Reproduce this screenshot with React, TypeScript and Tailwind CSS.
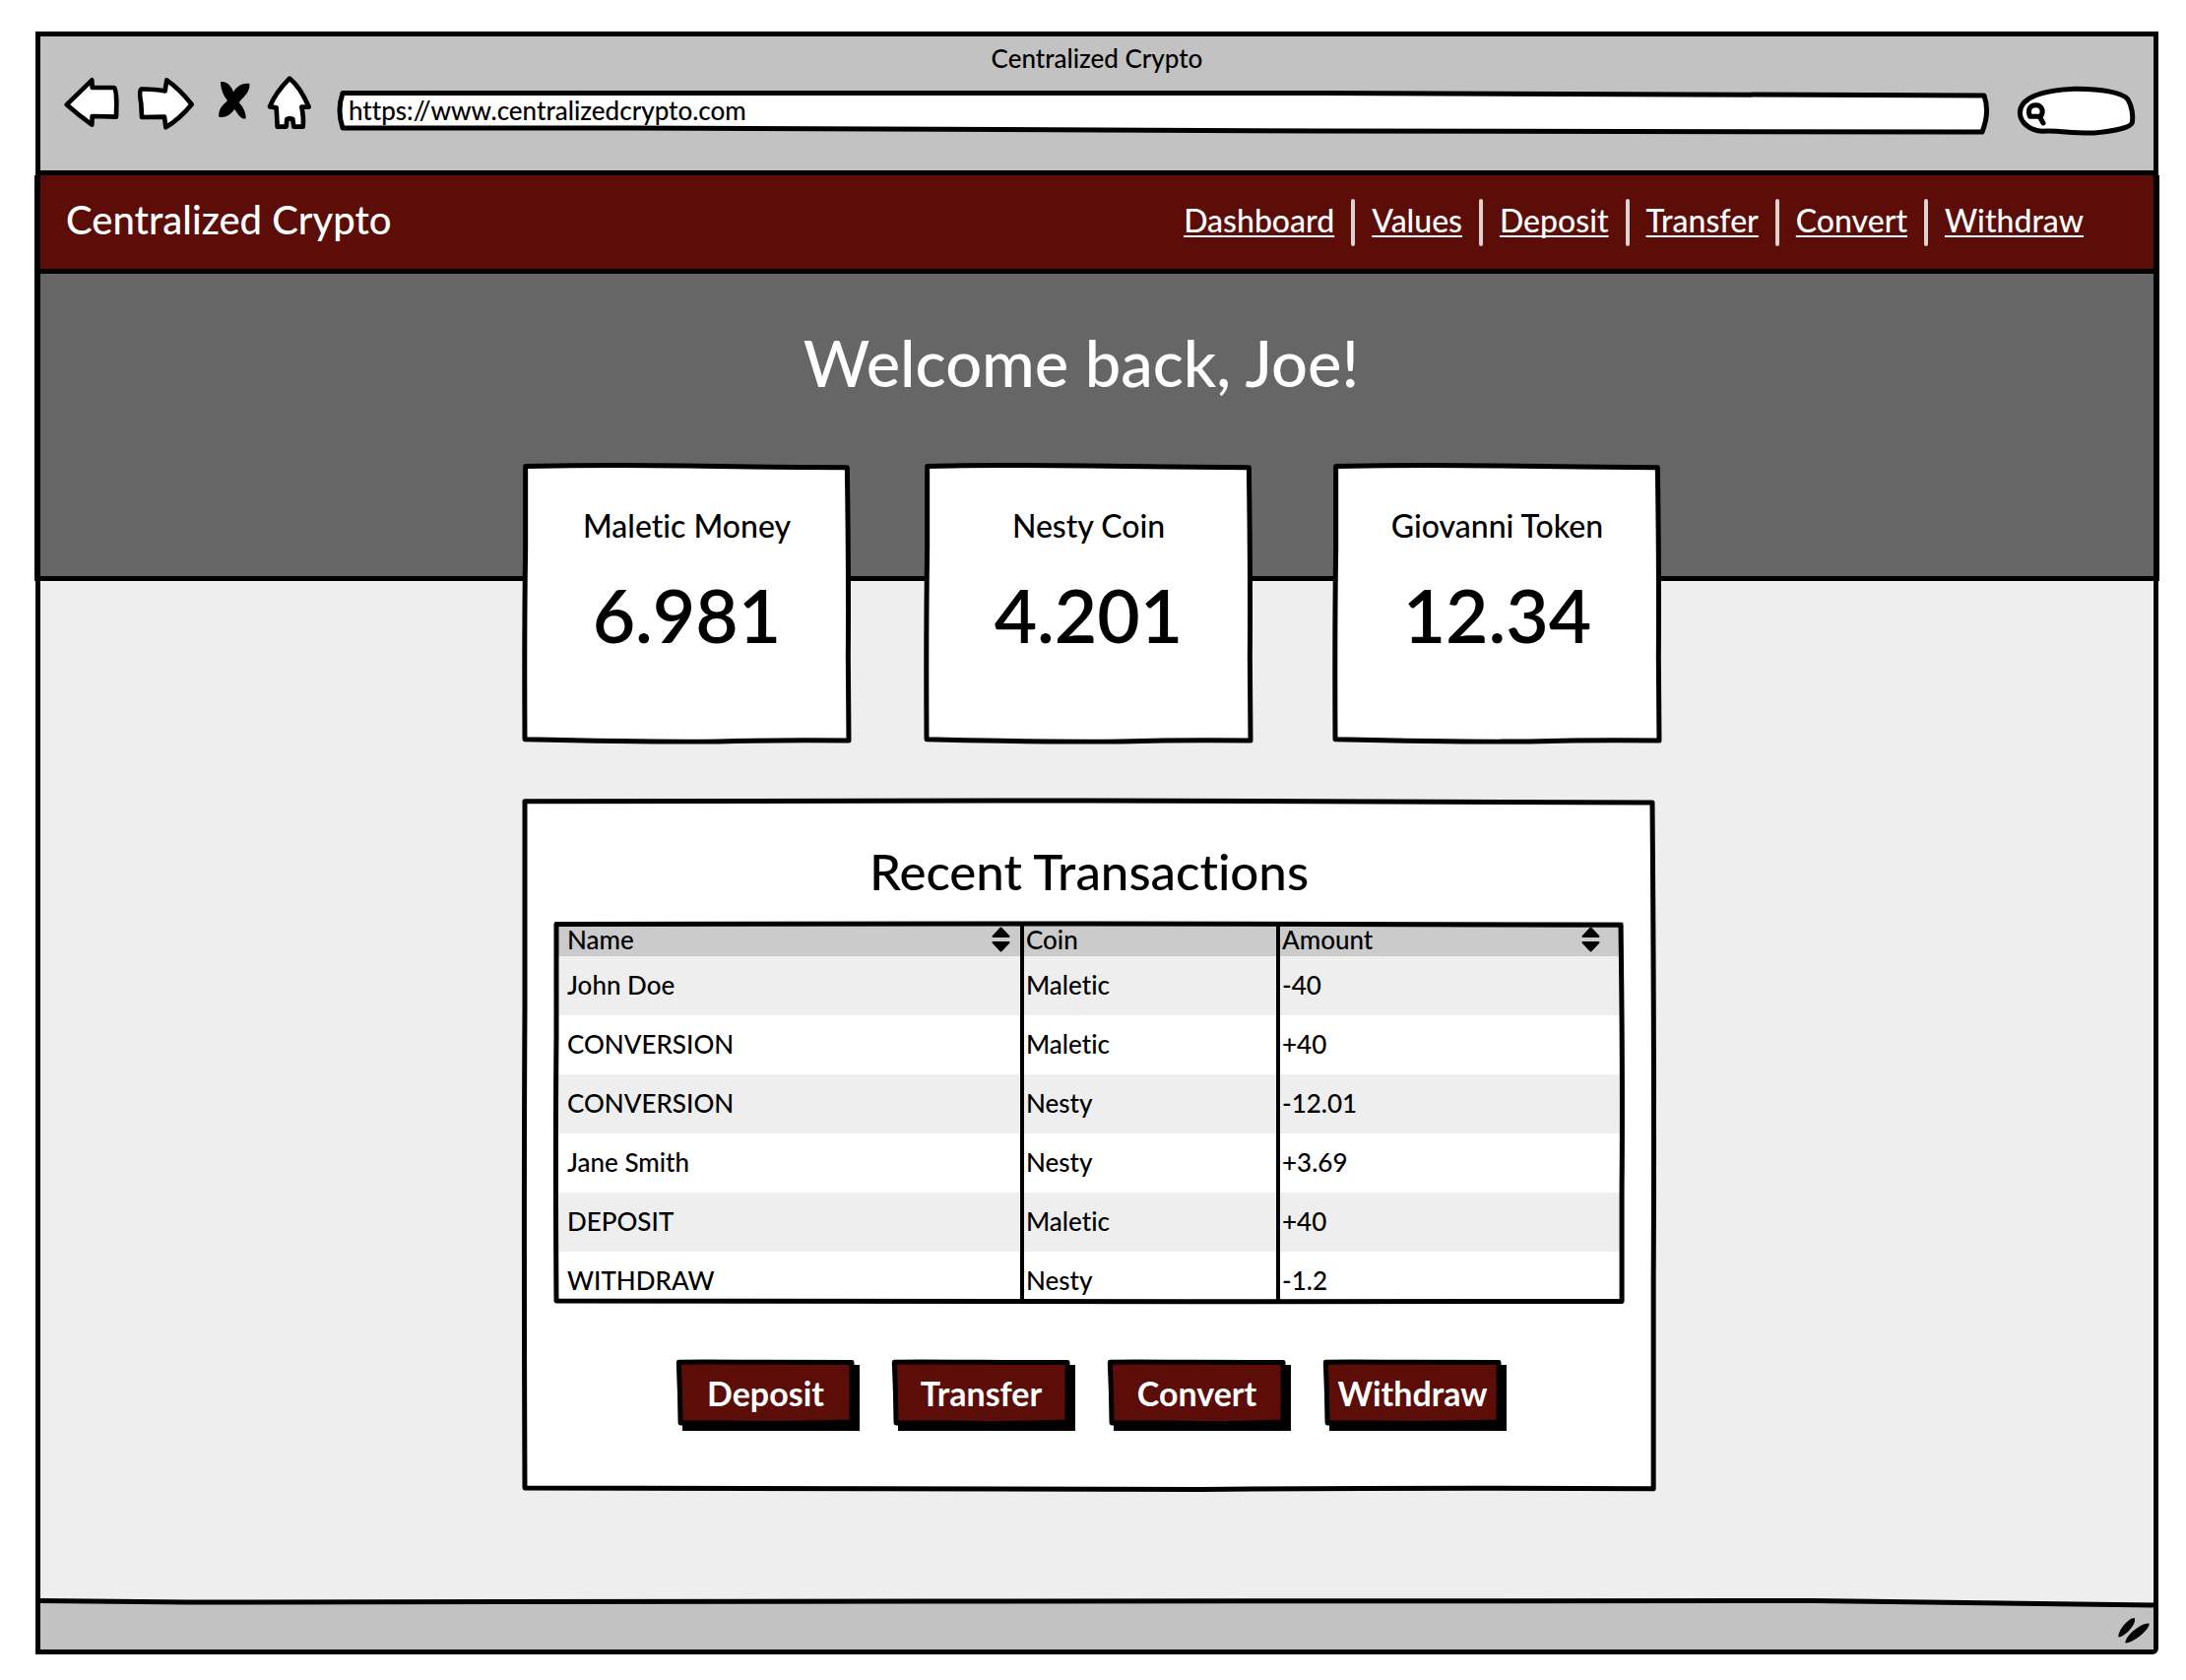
import type { ReactNode } from "react";

const NAV_LINKS = ["Dashboard", "Values", "Deposit", "Transfer", "Convert", "Withdraw"];

const BALANCES = [
  { name: "Maletic Money", amount: "6.981" },
  { name: "Nesty Coin", amount: "4.201" },
  { name: "Giovanni Token", amount: "12.34" },
];

const TRANSACTIONS = [
  { name: "John Doe", coin: "Maletic", amount: "-40" },
  { name: "CONVERSION", coin: "Maletic", amount: "+40" },
  { name: "CONVERSION", coin: "Nesty", amount: "-12.01" },
  { name: "Jane Smith", coin: "Nesty", amount: "+3.69" },
  { name: "DEPOSIT", coin: "Maletic", amount: "+40" },
  { name: "WITHDRAW", coin: "Nesty", amount: "-1.2" },
];

const ACTIONS = ["Deposit", "Transfer", "Convert", "Withdraw"];

/* Outlines on a 1000x1000 grid; a larger box needs a smaller wobble. */
const OUTLINES = {
  card: "M2 2 Q250 -5 500 0 Q750 5 998 6 Q1003 400 1001 700 L1003 1004 Q800 1001 600 1007 Q400 1010 0 999 Q-2 600 2 300 Z",
  panel: "M0 1 L500 0 Q750 2 1000 3 Q1002 400 1001 700 L1001 1001 Q800 999 600 1002 Q400 1003 0 1000 Q-1 600 0 300 Z",
  button: "M-4 5 Q60 -8 500 6 L1000 8 L1001 500 L1000 985 Q600 1020 300 1000 L6 998 Q4 500 -4 5 Z",
};

/* Slightly uneven hand-drawn outline that stretches with its parent box. */
function SketchBorder({ shape, fill = "none" }: { shape: keyof typeof OUTLINES; fill?: string }) {
  return (
    <svg
      aria-hidden="true"
      viewBox="0 0 1000 1000"
      preserveAspectRatio="none"
      className="pointer-events-none absolute top-[2px] left-[2px] h-[calc(100%-5px)] w-[calc(100%-5px)] overflow-visible"
    >
      <path
        d={OUTLINES[shape]}
        fill={fill}
        stroke="#000"
        strokeWidth="5"
        strokeLinejoin="round"
        vectorEffect="non-scaling-stroke"
      />
    </svg>
  );
}

function ToolButton({ label, children }: { label: string; children: ReactNode }) {
  return (
    <button type="button" aria-label={label} className="block shrink-0">
      {children}
    </button>
  );
}

function BrowserBar() {
  return (
    <header className="border-b-5 border-black bg-[#c2c2c2] pt-[6px] pb-[34px]">
      <p className="text-center text-[26px] leading-8 font-medium">Centralized Crypto</p>
      <div className="mt-px flex items-start pr-[18px] pl-[23px]">
        <div className="flex">
          <ToolButton label="Back">
            <svg width="58" height="56" viewBox="24 24 174 168" fill="#fff" stroke="#000" strokeWidth="14" strokeLinejoin="round">
              <path d="M35 115 L112 40 L113 63 L180 63 Q186 64 187 110 L186 152 L113 150 L112 176 Q75 150 35 115 Z" />
            </svg>
          </ToolButton>
          <div className="ml-4">
            <ToolButton label="Forward">
              <svg width="60" height="56" viewBox="246 24 180 168" fill="#fff" stroke="#000" strokeWidth="14" strokeLinejoin="round">
                <path d="M262 68 Q290 66 335 73 L340 40 Q380 68 416 114 Q380 158 337 184 L333 152 L264 153 L262 112 Q255 75 262 68 Z" />
              </svg>
            </ToolButton>
          </div>
          <div className="ml-[23px]">
            <ToolButton label="Stop">
              <svg width="34" height="56" viewBox="495 24 102 168" fill="#000">
                <path d="M504 46 C518 42 534 52 543 76 L556 104 C568 116 582 134 581 157 C570 161 560 150 549 132 L532 110 C516 94 505 74 504 46 Z" />
                <path d="M592 51 C594 68 584 84 568 98 L550 122 C540 142 522 156 499 152 C497 136 504 120 520 108 L541 80 C550 62 568 47 592 51 Z" />
              </svg>
            </ToolButton>
          </div>
          <div className="ml-[15px]">
            <ToolButton label="Home">
              <svg width="48" height="56" viewBox="642 24 144 168" fill="#fff" stroke="#000" strokeWidth="14" strokeLinejoin="round">
                <path d="M714 35 Q746 60 773 122 L751 122 Q758 155 755 182 L727 182 L724 159 Q714 155 706 159 L704 182 L677 182 L674 124 L654 121 Q670 80 714 35 Z" />
              </svg>
            </ToolButton>
          </div>
        </div>
        <div className="relative mt-4 ml-6 h-11 flex-1">
          <svg
            aria-hidden="true"
            viewBox="0 0 1678 44"
            preserveAspectRatio="none"
            className="pointer-events-none absolute inset-0 size-full overflow-visible"
          >
            <path
              d="M6 2.5 L1000 2.5 L1673 5 Q1679 22 1671 42 L1000 41 L300 38 L6 38 Q0 20 6 2.5 Z"
              fill="#fff"
              stroke="#000"
              strokeWidth="5"
              strokeLinejoin="round"
              vectorEffect="non-scaling-stroke"
            />
          </svg>
          <input
            type="text"
            aria-label="Address"
            defaultValue="https://www.centralizedcrypto.com"
            className="relative mt-1 block h-8 w-full bg-transparent px-3 text-[26px] leading-8 font-medium outline-none"
          />
        </div>
        <div className="relative mt-[11px] ml-7 h-[52px] w-[121px] shrink-0">
          <svg
            aria-hidden="true"
            viewBox="144 33 363 156"
            fill="none"
            stroke="#000"
            strokeWidth="15"
            strokeLinecap="round"
            strokeLinejoin="round"
            className="pointer-events-none absolute inset-0 size-full"
          >
            <path
              d="M222 172 C188 170 155 148 154 116 C155 72 210 48 320 43 C400 42 468 54 483 75 C495 95 500 125 496 146 C492 160 440 172 380 177 C310 179 270 168 222 172 Z"
              fill="#fff"
            />
            <path d="M185 127 C176 108 184 92 202 92 C222 92 228 112 217 127 Z" />
            <path d="M215 130 L225 147" />
          </svg>
          <input
            type="search"
            aria-label="Search"
            className="relative mt-2.5 ml-8 block h-8 w-20 bg-transparent text-[26px] outline-none"
          />
        </div>
      </div>
    </header>
  );
}

function SiteNav() {
  return (
    <nav className="-mx-[6px] flex h-[100px] items-center justify-between border-x-[6px] border-b-5 border-black bg-[#5c0d08] pr-[71px] pl-[26px] text-white">
      <p className="pb-[6px] text-[40px] leading-[48px] font-medium">Centralized Crypto</p>
      <ul className="flex items-center">
        {NAV_LINKS.map((link, i) => (
          <li key={link} className="flex items-center">
            {i > 0 && <span className="mx-[17px] h-12 w-1 rounded-full bg-[#dcd2d1]" />}
            <a
              href={`#${link.toLowerCase()}`}
              className="pb-1 text-[32px] leading-10 font-medium underline decoration-2 underline-offset-3 [text-decoration-skip-ink:none]"
            >
              {link}
            </a>
          </li>
        ))}
      </ul>
    </nav>
  );
}

function SortIcon() {
  return (
    <svg width="19" height="26" viewBox="0 0 19 26" fill="#000" stroke="#000" strokeWidth="2" strokeLinejoin="round">
      <path d="M9.5 1.5 L17.5 10 L1.5 10 Z" />
      <path d="M1.5 16 L17.5 16 L9.5 24.5 Z" />
    </svg>
  );
}

function HeaderCell({ label, sortable, className }: { label: string; sortable?: boolean; className: string }) {
  return (
    <th scope="col" className={`bg-[#cbcbcb] pt-0.5 pb-px text-left font-medium ${className}`}>
      <div className="flex items-center justify-between">
        {label}
        {sortable && (
          <button type="button" aria-label={`Sort by ${label}`}>
            <SortIcon />
          </button>
        )}
      </div>
    </th>
  );
}

function TransactionTable() {
  return (
    <div className="relative mt-[21px]">
      <table className="w-full table-fixed border-separate border-spacing-0 text-[26px] leading-8 font-medium">
        <colgroup>
          <col />
          <col className="w-[260px]" />
          <col className="w-[353px]" />
        </colgroup>
        <thead>
          <tr>
            <HeaderCell label="Name" sortable className="pr-[10px] pl-[13px]" />
            <HeaderCell label="Coin" className="border-l-4 border-black pl-0.5" />
            <HeaderCell label="Amount" sortable className="border-l-4 border-black pr-6 pl-0.5" />
          </tr>
        </thead>
        <tbody>
          {TRANSACTIONS.map((row, i) => (
            <tr
              key={i}
              className="bg-white odd:bg-[#eee] [&>td]:pt-[13px] [&>td]:pb-[15px] last:[&>td]:pb-2"
            >
              <td className="pl-[13px]">{row.name}</td>
              <td className="border-l-4 border-black pl-0.5">{row.coin}</td>
              <td className="border-l-4 border-black pl-0.5">{row.amount}</td>
            </tr>
          ))}
        </tbody>
      </table>
      <SketchBorder shape="panel" />
    </div>
  );
}

function ActionButton({ label }: { label: string }) {
  return (
    <button type="button" className="relative h-[67px] w-[180px] text-[34px] leading-10 font-bold text-white">
      <span className="absolute top-[5px] left-[5px] size-full bg-black" />
      <SketchBorder shape="button" fill="#5c0d08" />
      <span className="relative">{label}</span>
    </button>
  );
}

export default function App() {
  return (
    <div className="flex min-h-screen flex-col bg-white pt-8 pr-7 pb-[26px] pl-9 font-['Lato',sans-serif] text-black [font-variant-ligatures:none]">
      <div className="flex flex-1 flex-col rounded-br-md border-5 border-black bg-[#eee]">
        <BrowserBar />
        <SiteNav />
        <section className="-mx-[6px] h-[312px] border-x-[6px] border-b-5 border-black bg-[#666] pt-[50px] pr-8">
          <h1 className="text-center text-[65px] leading-[80px] font-medium text-white">Welcome back, Joe!</h1>
        </section>
        <main className="flex flex-1 justify-center pr-[10px] pb-[107px]">
          <div className="-mt-[119px] w-[1156px]">
            <section aria-label="Balances" className="grid grid-cols-[408px_415px_333px]">
              {BALANCES.map(({ name, amount }) => (
                <article key={name} className="relative h-[283px] w-[333px] pt-[43px] text-center">
                  <SketchBorder shape="card" fill="#fff" />
                  <h2 className="relative text-[32px] leading-10 font-medium">{name}</h2>
                  <p className="relative mt-6 text-[75px] leading-[92px] font-semibold">{amount}</p>
                </article>
              ))}
            </section>
            <section className="relative mt-[57px] mr-[6px] px-8 pt-[44px] pb-[66px]">
              <SketchBorder shape="panel" fill="#fff" />
              <h2 className="relative text-center text-[51px] leading-[60px] font-medium">Recent Transactions</h2>
              <TransactionTable />
              <div className="mt-[57px] flex justify-center gap-[39px]">
                {ACTIONS.map((label) => (
                  <ActionButton key={label} label={label} />
                ))}
              </div>
            </section>
          </div>
        </main>
        <footer className="relative h-[52px] bg-[#c2c2c2]">
          <svg
            aria-hidden="true"
            viewBox="0 0 2146 10"
            preserveAspectRatio="none"
            className="absolute inset-x-0 top-0 h-[10px] w-full overflow-visible"
          >
            <path d="M0 0 L2146 0 L2146 7 L1800 2 L0 2 Z" fill="#eee" />
            <path
              d="M0 2.5 L150 4 L900 3 L1800 2.5 L2146 7"
              fill="none"
              stroke="#000"
              strokeWidth="5"
              vectorEffect="non-scaling-stroke"
            />
          </svg>
          <svg aria-hidden="true" width="34" height="28" viewBox="0 0 34 28" className="absolute right-[3px] bottom-[5px]">
            <path d="M1.5 20.5 C0 15 11 1 17.5 1 C21 5 9 20 1.5 20.5 Z" />
            <path d="M8.5 26.5 C7 20 25 5 32.5 6.5 C34 12 17 26 8.5 26.5 Z" />
          </svg>
        </footer>
      </div>
    </div>
  );
}
